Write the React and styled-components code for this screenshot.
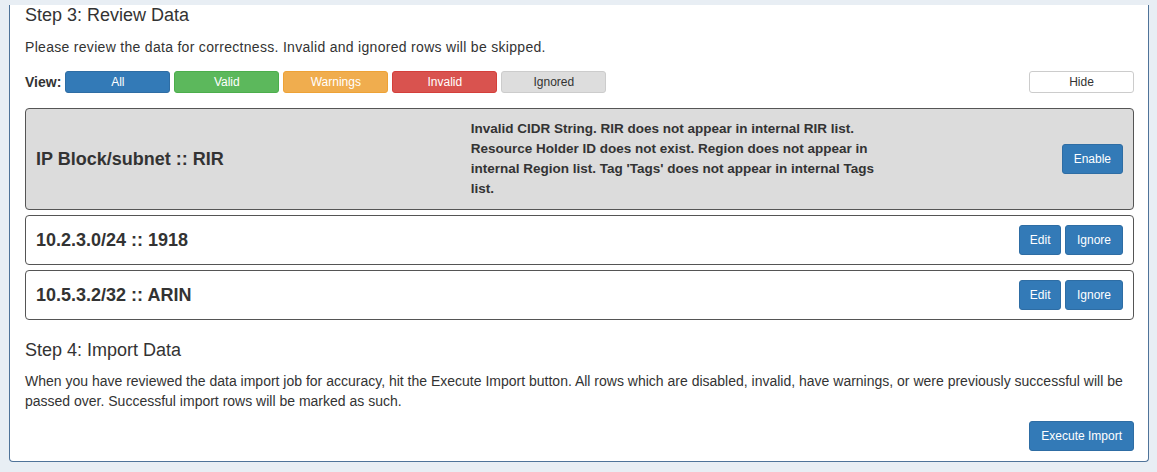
import React from "react";
import styled, {createGlobalStyle} from "styled-components";

const GlobalStyle = createGlobalStyle`
  html, body {
    margin: 0;
    padding: 0;
    background: #e8eef4;
  }
  body {
    font-family: "Liberation Sans", Arial, sans-serif;
    color: #333;
  }
`;

const Panel = styled.div`
  margin: 0 8px 0 9px;
  padding: 0 14px 10px 15px;
  background: #fff;
  border: 1px solid #4f7399;
  border-top: none;
  border-radius: 0 0 4px 4px;
`;

const StepTitle = styled.h3`
  margin: ${props => props.$top}px 0 0;
  font-size: 18px;
  line-height: 20px;
  font-weight: normal;
  color: #333;
`;

const Text = styled.p`
  margin: ${props => props.$top}px 0 0;
  font-size: 14px;
  line-height: 20px;
  letter-spacing: ${props => props.$spread || 0}px;
`;

const ViewBar = styled.div`
  display: flex;
  align-items: center;
  gap: 4px;
  margin-top: 14px;
`;

const ViewLabel = styled.span`
  font-size: 14px;
  font-weight: bold;
`;

const colours = {
    all: {bg: "#337ab7", border: "#2e6da4", fg: "#fff"},
    valid: {bg: "#5cb85c", border: "#4cae4c", fg: "#fff"},
    warn: {bg: "#f0ad4e", border: "#eea236", fg: "#fff"},
    invalid: {bg: "#d9534f", border: "#d43f3a", fg: "#fff"},
    ignored: {bg: "#dddddd", border: "#cccccc", fg: "#333"},
    hide: {bg: "#fff", border: "#ccc", fg: "#333"},
};

const FilterButton = styled.button`
  width: 105px;
  height: 22px;
  padding: 0;
  font-family: inherit;
  font-size: 12px;
  border-radius: 3px;
  border: 1px solid ${props => colours[props.$kind].border};
  background: ${props => colours[props.$kind].bg};
  color: ${props => colours[props.$kind].fg};
  margin-left: ${props => props.$push ? "auto" : "0"};
`;

const RowList = styled.div`
  display: flex;
  flex-direction: column;
  gap: 5px;
  margin-top: 15px;
`;

const RowCard = styled.div`
  display: flex;
  align-items: center;
  padding: ${props => props.$disabled ? "10px" : "9px 10px"};
  border: 1px solid #555;
  border-radius: 4px;
  background: ${props => props.$disabled ? "#dcdcdc" : "#fff"};
`;

const RowTitle = styled.div`
  flex: 0 0 40%;
  font-size: 18px;
  font-weight: bold;
`;

const RowMessage = styled.div`
  flex: 0 0 40%;
  padding-right: 14px;
  box-sizing: border-box;
  font-size: 13.5px;
  font-weight: bold;
  line-height: 20px;
`;

const RowActions = styled.div`
  flex: 1;
  display: flex;
  justify-content: flex-end;
  gap: 4px;
`;

const ActionButton = styled.button`
  height: 30px;
  padding: 0 ${props => props.$pad || 11}px;
  font-family: inherit;
  font-size: 12px;
  color: #fff;
  background: #337ab7;
  border: 1px solid #2e6da4;
  border-radius: 3px;
`;

const Footer = styled.div`
  display: flex;
  justify-content: flex-end;
  margin-top: 10px;
`;

const rows = [
    {title: "IP Block/subnet :: RIR", disabled: true,
        message: "Invalid CIDR String. RIR does not appear in internal RIR list. Resource Holder ID does not exist. Region does not appear in internal Region list. Tag 'Tags' does not appear in internal Tags list."},
    {title: "10.2.3.0/24 :: 1918"},
    {title: "10.5.3.2/32 :: ARIN"},
];

export default function App() {
    return (
        <>
            <GlobalStyle/>
            <Panel>
                <StepTitle $top={5}>Step 3: Review Data</StepTitle>
                <Text $top={12} $spread={0.3}>Please review the data for correctness. Invalid and ignored rows will be skipped.</Text>
                <ViewBar>
                    <ViewLabel>View:</ViewLabel>
                    <FilterButton $kind="all">All</FilterButton>
                    <FilterButton $kind="valid">Valid</FilterButton>
                    <FilterButton $kind="warn">Warnings</FilterButton>
                    <FilterButton $kind="invalid">Invalid</FilterButton>
                    <FilterButton $kind="ignored">Ignored</FilterButton>
                    <FilterButton $kind="hide" $push>Hide</FilterButton>
                </ViewBar>
                <RowList>
                    {rows.map((row, index) => (
                        <RowCard key={index} $disabled={row.disabled}>
                            <RowTitle>{row.title}</RowTitle>
                            <RowMessage>{row.message}</RowMessage>
                            <RowActions>
                                {row.disabled
                                    ? <ActionButton>Enable</ActionButton>
                                    : <>
                                        <ActionButton $pad={9.5}>Edit</ActionButton>
                                        <ActionButton>Ignore</ActionButton>
                                    </>}
                            </RowActions>
                        </RowCard>
                    ))}
                </RowList>
                <StepTitle $top={20}>Step 4: Import Data</StepTitle>
                <Text $top={11}>
                    When you have reviewed the data import job for accuracy, hit the Execute Import button. All rows which
                    are disabled, invalid, have warnings, or were previously successful will be passed over. Successful
                    import rows will be marked as such.
                </Text>
                <Footer>
                    <ActionButton>Execute Import</ActionButton>
                </Footer>
            </Panel>
        </>
    );
}
